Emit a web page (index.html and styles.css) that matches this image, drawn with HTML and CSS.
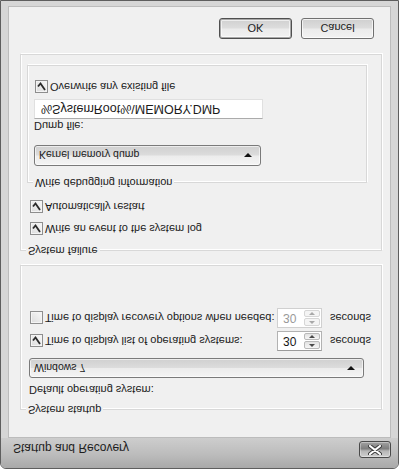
FILE: index.html
```html
<!DOCTYPE html>
<html>
<head>
<meta charset="utf-8">
<link rel="stylesheet" href="styles.css">
</head>
<body>
<div class="window">
  <div class="titlebar">
    <span class="title">Startup and Recovery</span>
    <button class="close" type="button" aria-label="Close">
      <svg width="14" height="10" viewBox="0 0 14 10"><path d="M2 1 L12 9 M12 1 L2 9" stroke="#3a3a3a" stroke-width="4" stroke-linecap="round"/><path d="M2 1 L12 9 M12 1 L2 9" stroke="#ffffff" stroke-width="2.2" stroke-linecap="round"/></svg>
    </button>
  </div>
  <div class="client">
    <div class="group group-startup">
      <span class="legend">System startup</span>
      <div class="label">Default operating system:</div>
      <div class="combo combo-os"><span>Windows 7</span><span class="arrow"></span></div>
      <div class="row-spin row-first">
        <div class="check-row"><span class="cb checked"><svg width="9" height="9" viewBox="0 0 9 9"><path d="M1 4.5 L3.5 7.5 L8 1" fill="none" stroke="#2b2b2b" stroke-width="1.8"/></svg></span><span>Time to display list of operating systems:</span></div>
        <div class="spin"><span class="spin-val">30</span><span class="spin-btns"><span class="sb up"></span><span class="sb down"></span></span></div>
        <span>seconds</span>
      </div>
      <div class="row-spin row-second">
        <div class="check-row"><span class="cb"></span><span>Time to display recovery options when needed:</span></div>
        <div class="spin disabled"><span class="spin-val">30</span><span class="spin-btns"><span class="sb up"></span><span class="sb down"></span></span></div>
        <span>seconds</span>
      </div>
    </div>

    <div class="group group-failure">
      <span class="legend">System failure</span>
      <div class="check-row cr-event"><span class="cb checked"><svg width="9" height="9" viewBox="0 0 9 9"><path d="M1 4.5 L3.5 7.5 L8 1" fill="none" stroke="#2b2b2b" stroke-width="1.8"/></svg></span><span>Write an event to the system log</span></div>
      <div class="check-row cr-restart"><span class="cb checked"><svg width="9" height="9" viewBox="0 0 9 9"><path d="M1 4.5 L3.5 7.5 L8 1" fill="none" stroke="#2b2b2b" stroke-width="1.8"/></svg></span><span>Automatically restart</span></div>
      <div class="group group-debug">
        <span class="legend">Write debugging information</span>
        <div class="combo combo-kernel"><span>Kernel memory dump</span><span class="arrow"></span></div>
        <div class="label label-dump">Dump file:</div>
        <div class="textbox">%SystemRoot%\MEMORY.DMP</div>
        <div class="check-row cr-overwrite"><span class="cb checked"><svg width="9" height="9" viewBox="0 0 9 9"><path d="M1 4.5 L3.5 7.5 L8 1" fill="none" stroke="#2b2b2b" stroke-width="1.8"/></svg></span><span>Overwrite any existing file</span></div>
      </div>
    </div>

    <div class="buttons">
      <button class="btn btn-default" type="button">OK</button>
      <button class="btn" type="button">Cancel</button>
    </div>
  </div>
</div>
</body>
</html>
```

FILE: styles.css
```css
html, body {
  margin: 0;
  padding: 0;
  background: #ffffff;
}
body {
  width: 399px;
  height: 469px;
  overflow: hidden;
  font-family: "Liberation Sans", Arial, sans-serif;
  font-size: 11px;
  color: #1a1a1a;
}
.window {
  width: 399px;
  height: 469px;
  box-sizing: border-box;
  border: 1px solid #5e5e5e;
  border-radius: 6px 6px 0 0;
  background: #d6d6d6;
  display: flex;
  flex-direction: column;
  transform: scaleY(-1);
}
.titlebar {
  height: 30px;
  flex: none;
  box-sizing: border-box;
  display: flex;
  align-items: center;
  padding: 8px 7px 2px 12px;
  background: linear-gradient(#a9a9a9, #bcbcbc 45%, #cdcdcd 100%);
  border-radius: 5px 5px 0 0;
}
.title {
  font-size: 12px;
  color: #1e1e1e;
  margin-top: 3px;
}
.close {
  margin-left: auto;
  width: 32px;
  height: 17px;
  padding: 0;
  box-sizing: border-box;
  border: 1px solid #4a4a4a;
  border-radius: 3px;
  background: linear-gradient(#cfcfcf, #b7b7b7 40%, #7e7e7e 55%, #a2a2a2 100%);
  display: flex;
  align-items: center;
  justify-content: center;
  box-shadow: inset 0 0 0 1px rgba(255,255,255,0.35);
}
.client {
  flex: 1;
  margin: 0 7px 5px 7px;
  border: 1px solid #bcbcbc;
  background: #f0f0f0;
  padding: 27px 8px 0 11px;
  display: flex;
  flex-direction: column;
}
.group {
  position: relative;
  border: 1px solid #d8d8d8;
  box-shadow: inset 1px 1px 0 #ffffff, 1px 1px 0 #ffffff;
  display: flex;
  flex-direction: column;
}
.legend {
  position: absolute;
  top: -7px;
  left: 5px;
  padding: 0 2px;
  background: #f0f0f0;
  line-height: 13px;
  white-space: nowrap;
}
.group-startup {
  height: 145px;
  box-sizing: border-box;
  padding: 12px 17px 0 8px;
}
.label {
  line-height: 14px;
  height: 14px;
}
.combo {
  margin-top: 5px;
  height: 20px;
  box-sizing: border-box;
  border: 1px solid #7a7a7a;
  border-radius: 3px;
  background: linear-gradient(#f4f4f4, #ececec 48%, #dcdcdc 52%, #d0d0d0 100%);
  display: flex;
  align-items: center;
  padding: 0 8px 0 4px;
  box-shadow: inset 0 0 0 1px rgba(255,255,255,0.6);
  font-size: 10.5px;
}
.arrow {
  margin-left: auto;
  width: 0;
  height: 0;
  border-left: 4px solid transparent;
  border-right: 4px solid transparent;
  border-top: 4px solid #111;
}
.combo-os {
  width: 335px;
}
.row-spin {
  display: grid;
  grid-template-columns: 240px 45px auto;
  column-gap: 8px;
  align-items: center;
  height: 20px;
}
.row-first {
  margin-top: 7px;
}
.row-second {
  margin-top: 3px;
}
.check-row {
  display: flex;
  align-items: center;
  gap: 2px;
  height: 16px;
  white-space: nowrap;
}
.cb {
  width: 13px;
  height: 13px;
  box-sizing: border-box;
  border: 1px solid #8e8e8e;
  background: linear-gradient(135deg, #dcdcdc, #f8f8f8);
  box-shadow: inset 0 0 0 1px #f4f4f4;
  display: flex;
  align-items: center;
  justify-content: center;
  margin-left: 1px;
  flex: none;
}
.spin {
  height: 20px;
  box-sizing: border-box;
  border: 1px solid #b2b2b2;
  border-top-color: #9a9a9a;
  background: #ffffff;
  display: flex;
  align-items: stretch;
}
.spin-val {
  flex: 1;
  padding-left: 5px;
  line-height: 18px;
  font-size: 12px;
}
.spin-btns {
  width: 16px;
  display: flex;
  flex-direction: column;
  padding: 1px 1px 1px 0;
  gap: 1px;
}
.sb {
  flex: 1;
  border: 1px solid #b9b9b9;
  border-radius: 2px;
  background: linear-gradient(#f6f6f6, #e2e2e2);
  position: relative;
}
.sb::after {
  content: "";
  position: absolute;
  left: 50%;
  top: 50%;
  margin-left: -3px;
  margin-top: -2px;
  border-left: 3px solid transparent;
  border-right: 3px solid transparent;
}
.sb.up::after {
  border-bottom: 3px solid #4a4a4a;
}
.sb.down::after {
  border-top: 3px solid #4a4a4a;
  margin-top: -1px;
}
.spin.disabled {
  border-color: #d0d0d0;
  color: #9a9a9a;
}
.spin.disabled .sb {
  border-color: #d6d6d6;
  background: #f4f4f4;
}
.spin.disabled .sb.up::after { border-bottom-color: #a8a8a8; }
.spin.disabled .sb.down::after { border-top-color: #a8a8a8; }
.spin.disabled .spin-val { color: #9a9a9a; }

.group-failure {
  margin-top: 14px;
  height: 197px;
  box-sizing: border-box;
  padding: 13px 14px 0 8px;
}
.cr-restart {
  margin-top: 6px;
}
.group-debug {
  margin-top: 16px;
  margin-left: -2px;
  height: 118px;
  box-sizing: border-box;
  padding: 16px 0 0 6px;
}
.combo-kernel {
  margin-top: 0;
  width: 227px;
  height: 21px;
}
.label-dump {
  margin-top: 12px;
}
.textbox {
  width: 229px;
  height: 20px;
  box-sizing: border-box;
  border: 1px solid #e0e0e0;
  border-top-color: #ababab;
  background: #ffffff;
  padding-left: 6px;
  line-height: 18px;
  font-size: 12.5px;
}
.cr-overwrite {
  margin-top: 4px;
}
.buttons {
  margin-top: 15px;
  display: flex;
  justify-content: flex-end;
  gap: 9px;
  padding-right: 8px;
}
.btn {
  width: 73px;
  height: 21px;
  box-sizing: border-box;
  border: 1px solid #707070;
  border-radius: 3px;
  background: linear-gradient(#f2f2f2, #ebebeb 48%, #dddddd 52%, #cfcfcf 100%);
  box-shadow: inset 0 0 0 1px rgba(255,255,255,0.7);
  font-family: "Liberation Sans", Arial, sans-serif;
  font-size: 11px;
  color: #1a1a1a;
  padding: 0;
}
.btn-default {
  border-color: #4f4f4f;
  box-shadow: inset 0 0 0 1px #a8a8a8, inset 0 0 0 2px rgba(255,255,255,0.6);
}
```
